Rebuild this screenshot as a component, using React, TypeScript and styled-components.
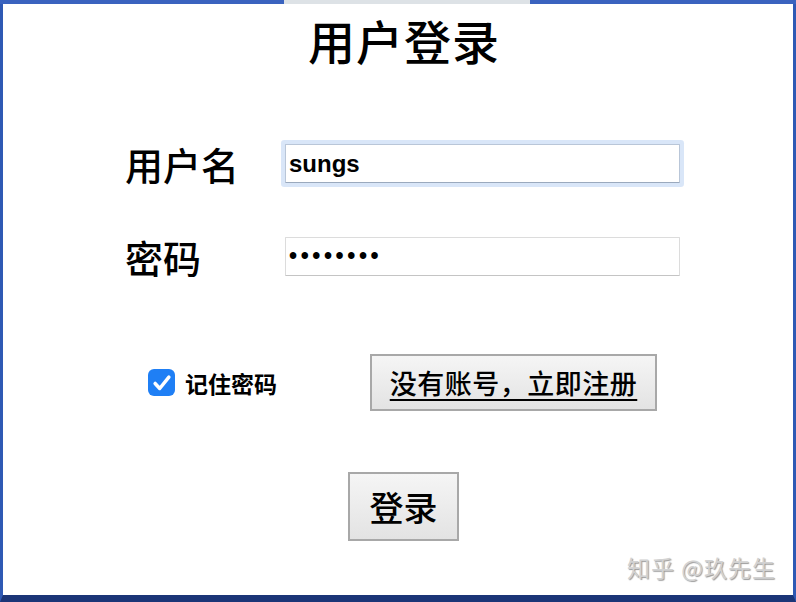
import React, { useState } from "react";
import styled, { createGlobalStyle } from "styled-components";

const GlobalStyle = createGlobalStyle`
  html, body {
    margin: 0;
    padding: 0;
    background: #ffffff;
  }
  * {
    box-sizing: border-box;
  }
`;

const CJK = `"Noto Sans CJK SC", "Noto Sans", sans-serif`;

const Page = styled.div`
  width: 796px;
  height: 602px;
  display: flex;
  flex-direction: column;
  font-family: ${CJK};
  color: #000;
`;

const TopBar = styled.div`
  height: 4px;
  display: flex;
`;

const BarPart = styled.div<{ $w?: number; $tone: "blue" | "gray" }>`
  flex: ${(p) => (p.$w ? `0 0 ${p.$w}px` : "1")};
  background: ${(p) => (p.$tone === "blue" ? "#3a63bf" : "#dde2e6")};
`;

const Frame = styled.div`
  flex: 1;
  position: relative;
  display: flex;
  flex-direction: column;
  border-left: 3px solid #2f59b4;
  border-right: 3px solid #2f59b4;
  border-bottom: 7px solid #1b3577;
  background: #fff;
`;

const Title = styled.h1`
  margin: 10px 0 0;
  padding-left: 12px;
  height: 52px;
  line-height: 52px;
  text-align: center;
  font-size: 47px;
  font-weight: 500;
  letter-spacing: 1px;
`;

const Form = styled.form`
  margin: 78px 0 0 122px;
  display: flex;
  flex-direction: column;
`;

const FieldRow = styled.div<{ $gap: number }>`
  display: flex;
  align-items: center;
  height: 39px;
  margin-top: ${(p) => p.$gap}px;
`;

const Label = styled.label`
  width: 160px;
  font-size: 38px;
  font-weight: 500;
  line-height: 39px;
`;

const Input = styled.input<{ $focus?: boolean; $spacing?: number; $size?: number }>`
  width: 395px;
  height: 39px;
  border: 1px solid ${(p) => (p.$focus ? "#b9c6d8" : "#dcdcdc")};
  border-bottom-color: ${(p) => (p.$focus ? "#9aa9bd" : "#c4c4c4")};
  border-radius: 1px;
  padding: 0 3px;
  font-family: "Liberation Sans", Arial, sans-serif;
  font-size: ${(p) => p.$size ?? 24}px;
  font-weight: bold;
  letter-spacing: ${(p) => p.$spacing ?? 0}px;
  color: #000;
  outline: none;
  box-shadow: ${(p) => (p.$focus ? "0 0 0 4px #d9e6f8" : "none")};
`;

const OptionsRow = styled.div`
  display: flex;
  align-items: center;
  margin-top: 78px;
  height: 57px;
`;

const Remember = styled.label`
  display: flex;
  align-items: center;
  margin-left: 23px;
  width: 222px;
  font-size: 23px;
  font-weight: 700;
  cursor: pointer;
`;

const Box = styled.span`
  width: 27px;
  height: 27px;
  border-radius: 6px;
  background: #1f7ff5;
  display: flex;
  align-items: center;
  justify-content: center;
  margin-right: 10px;
`;

const Button = styled.button<{ $size: number }>`
  font-family: ${CJK};
  font-size: ${(p) => p.$size}px;
  font-weight: 500;
  color: #000;
  background: linear-gradient(#f5f5f5, #e3e3e3);
  border: 2px solid #a8a8a8;
  border-radius: 0;
  cursor: pointer;
`;

const RegisterButton = styled(Button)`
  width: 287px;
  height: 57px;
  padding: 0;
  letter-spacing: 0.5px;
  text-decoration: underline;
  text-underline-offset: 5px;
  text-decoration-thickness: 2px;
`;

const SubmitRow = styled.div`
  display: flex;
  justify-content: center;
  margin-top: 61px;
  padding-left: 11px;
`;

const LoginButton = styled(Button)`
  width: 111px;
  height: 69px;
  padding: 0;
`;

const Watermark = styled.div`
  position: absolute;
  right: 17px;
  bottom: 11px;
  font-size: 23px;
  color: #d2d2d2;
  letter-spacing: 1px;
  text-shadow: 1px 1px 1px #9a9a9a;
`;

const CheckMark = () => (
  <svg width="22" height="22" viewBox="0 0 24 24" fill="none">
    <path
      d="M4.5 12.5l5 5.5L19.5 5.5"
      stroke="#fff"
      strokeWidth="3.8"
      strokeLinecap="round"
      strokeLinejoin="round"
    />
  </svg>
);

const App: React.FunctionComponent = () => {
  const [user, setUser] = useState("sungs");
  const [pwd, setPwd] = useState("12345678");
  const [remember, setRemember] = useState(true);

  return (
    <Page>
      <GlobalStyle />
      <TopBar>
        <BarPart $w={284} $tone="blue" />
        <BarPart $w={246} $tone="gray" />
        <BarPart $tone="blue" />
      </TopBar>
      <Frame>
        <Title>用户登录</Title>
        <Form onSubmit={(e) => e.preventDefault()}>
          <FieldRow $gap={0}>
            <Label>用户名</Label>
            <Input $focus value={user} onChange={(e) => setUser(e.target.value)} />
          </FieldRow>
          <FieldRow $gap={54}>
            <Label>密码</Label>
            <Input
              type="password"
              $size={23}
              $spacing={3.6}
              value={pwd}
              onChange={(e) => setPwd(e.target.value)}
            />
          </FieldRow>
          <OptionsRow>
            <Remember onClick={() => setRemember(!remember)}>
              <Box>{remember && <CheckMark />}</Box>
              记住密码
            </Remember>
            <RegisterButton type="button" $size={27}>
              没有账号，立即注册
            </RegisterButton>
          </OptionsRow>
        </Form>
        <SubmitRow>
          <LoginButton type="submit" $size={34}>
            登录
          </LoginButton>
        </SubmitRow>
        <Watermark>知乎 @玖先生</Watermark>
      </Frame>
    </Page>
  );
};

export default App;
